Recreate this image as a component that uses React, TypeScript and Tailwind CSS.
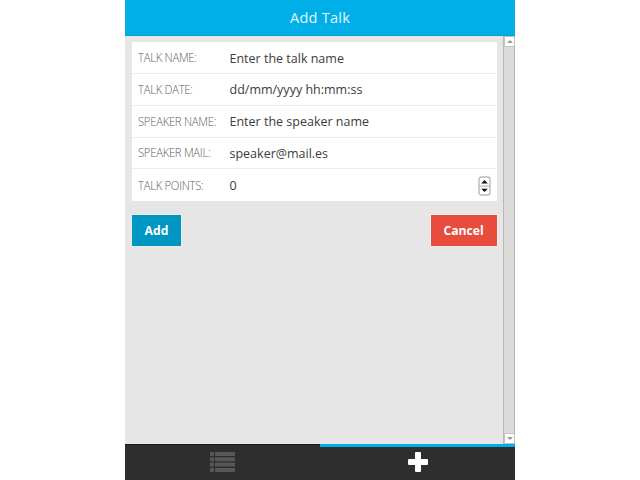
import React from 'react';

const fields = [
  { label: 'TALK NAME:', value: 'Enter the talk name' },
  { label: 'TALK DATE:', value: 'dd/mm/yyyy hh:mm:ss' },
  { label: 'SPEAKER NAME:', value: 'Enter the speaker name' },
  { label: 'SPEAKER MAIL:', value: 'speaker@mail.es' },
  { label: 'TALK POINTS:', value: '0', stepper: true },
];

function Stepper() {
  return (
    <svg width="13" height="20" viewBox="0 0 13 20" className="mr-[6px] mb-px shrink-0">
      <rect x="1" y="1" width="11" height="18" rx="2.5" fill="#fff" stroke="#b9b9b9" strokeWidth="1.4" />
      <path d="M1 10h11" stroke="#aaa" />
      <path d="M3.2 7.5h6.6L6.5 4zM3.2 12.7h6.6L6.5 16z" fill="#111" />
    </svg>
  );
}

function ScrollButton({ down = false }: { down?: boolean }) {
  return (
    <div className="flex h-[11px] w-[11px] items-center justify-center border border-[#c2c2c2] bg-white">
      <svg width="6" height="3" viewBox="0 0 6 3">
        <path d={down ? 'M0 0h6L3 3z' : 'M0 3h6L3 0z'} fill="#999" />
      </svg>
    </div>
  );
}

export default function App() {
  return (
    <div className="flex h-[480px] w-[640px] justify-center overflow-hidden bg-white font-['Open_Sans',sans-serif]">
      <div className="flex w-[390px] flex-col bg-[#e6e6e6]">
        <header className="flex h-9 shrink-0 items-center justify-center border-b border-[#0c9ccb] bg-[#00afe7] text-[14.5px] text-[#e4f6fc]">
          <span className="tracking-[0.25px]">Add Talk</span>
        </header>
        <div className="flex min-h-0 flex-1">
          <main className="flex-1 pr-[6.4px] pl-[7px] pt-[6px]">
            <div className="bg-white">
              {fields.map((f, i) => (
                <div
                  key={f.label}
                  className={`flex items-center pl-[6px] pt-[2px] ${i === 0 ? 'h-8' : 'h-[31.75px]'} ${i < 4 ? 'border-b border-[#ececec]' : ''}`}
                >
                  <span className="flex w-[91.5px] shrink-0 pb-px whitespace-nowrap">
                    <span className="origin-left scale-x-[0.94] text-[12px] leading-[18px] font-light tracking-[-0.3px] text-[#606060]">
                      {f.label}
                    </span>
                  </span>
                  <span className="flex-1 whitespace-nowrap text-[12.5px] leading-[18px] text-[#3c3c3c]">
                    {f.value}
                  </span>
                  {f.stepper && <Stepper />}
                </div>
              ))}
            </div>
            <div className="mt-[13.5px] flex justify-between text-[12.2px] font-bold text-white">
              <button className="h-[31px] w-[49px] bg-[#0096c2] pt-[2px] shadow-[0_0_0_1px_#ededed]">Add</button>
              <button className="h-[31px] w-[66px] bg-[#e74c3c] pt-[2px] shadow-[0_0_0_1px_#ededed]">Cancel</button>
            </div>
          </main>
          <div className="flex w-[12px] flex-col justify-between border-l border-[#b8b8b8] bg-[#dddbd9] shadow-[inset_-1px_0_#b5b5b5]">
            <ScrollButton />
            <ScrollButton down />
          </div>
        </div>
        <nav className="flex h-9 shrink-0 bg-[#2e2e2e]">
          <div className="flex flex-1 items-center justify-center border-t border-[#171917] pb-px">
            <svg width="25" height="20" viewBox="0 0 25 20" fill="#575757">
              {[0, 5.3, 10.6, 15.9].map((y) => (
                <g key={y}>
                  <rect x="0" y={y} width="4" height="4" rx="0.6" />
                  <rect x="5" y={y} width="20" height="4" rx="0.6" />
                </g>
              ))}
            </svg>
          </div>
          <div className="flex flex-1 items-center justify-center border-t-[3px] border-[#00afe7] pb-[4px]">
            <svg width="20" height="20" viewBox="0 0 20 20">
              <path
                d="M8 0h4a1 1 0 0 1 1 1v6h6a1 1 0 0 1 1 1v4a1 1 0 0 1-1 1h-6v6a1 1 0 0 1-1 1H8a1 1 0 0 1-1-1v-6H1a1 1 0 0 1-1-1V8a1 1 0 0 1 1-1h6V1a1 1 0 0 1 1-1z"
                fill="#fff"
              />
            </svg>
          </div>
        </nav>
      </div>
    </div>
  );
}
